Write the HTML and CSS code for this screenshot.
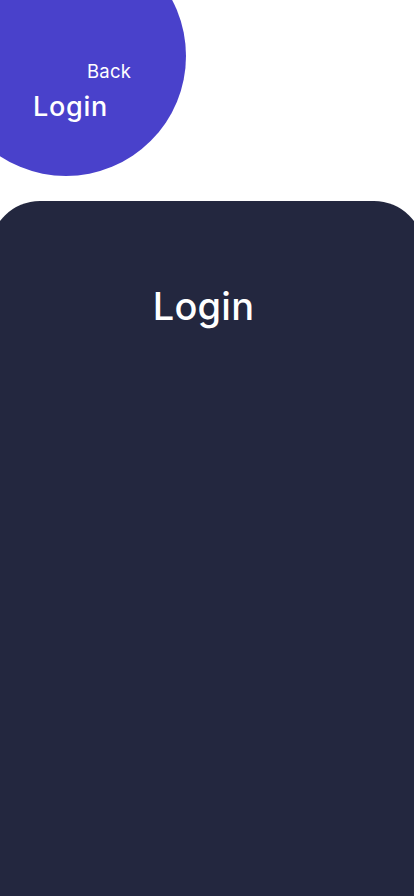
FILE: index.html
```html
<!DOCTYPE html>
<html lang="en">
<head>
<meta charset="utf-8">
<title>Login</title>
<link rel="stylesheet" href="styles.css">
</head>
<body>
  <header class="top">
    <div class="blob">
      <a class="back" href="#">Back</a>
      <span class="blob-title">Login</span>
    </div>
  </header>
  <main class="panel">
    <h1 class="panel-title">Login</h1>
  </main>
</body>
</html>
```
FILE: styles.css
```css
html, body {
  margin: 0;
  padding: 0;
  background: #ffffff;
  font-family: Inter, "Noto Sans", sans-serif;
  overflow: hidden;
}

.top {
  display: flow-root;
  height: 201px;
}

.blob {
  width: 240px;
  height: 240px;
  margin-top: -64px;
  margin-left: -54px;
  border-radius: 50%;
  background: #4941cb;
  display: flex;
  flex-direction: column;
  align-items: flex-start;
  padding: 124px 0 0 87px;
  box-sizing: border-box;
}

.back {
  color: #ffffff;
  text-decoration: none;
  font-size: 18.5px;
  line-height: 23px;
  margin-left: 54px;
  letter-spacing: 0.2px;
}

.blob-title {
  color: #ffffff;
  font-size: 27px;
  font-weight: 500;
  line-height: 34px;
  letter-spacing: 0.7px;
  margin-top: 7px;
}

.panel {
  margin: 0 -10px;
  height: 695px;
  background: #23273f;
  border-radius: 50px 50px 0 0;
  display: flex;
  flex-direction: column;
  align-items: center;
}

.panel-title {
  margin: 0;
  padding: 81px 7px 0 0;
  color: #ffffff;
  font-weight: 500;
  font-size: 38px;
  line-height: 48px;
  letter-spacing: 0.2px;
}
```
